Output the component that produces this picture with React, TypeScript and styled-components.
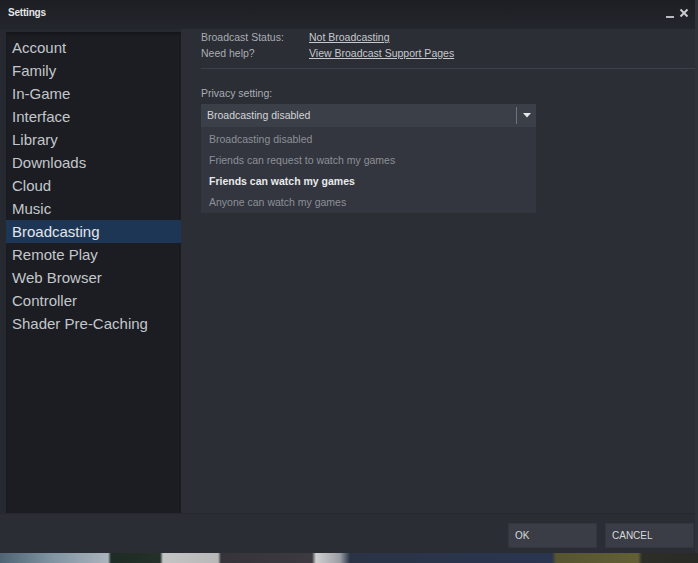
import React from "react";
import styled, { createGlobalStyle } from "styled-components";

const Global = createGlobalStyle`
  html, body { margin: 0; padding: 0; background: #2a2c31; }
  body { font-family: "Liberation Sans", Arial, sans-serif; overflow: hidden; }
  #root { width: 698px; height: 563px; }
`;

const Page = styled.div`
  width: 698px;
  height: 563px;
  display: flex;
  flex-direction: column;
`;

const Window = styled.div`
  height: 553px;
  display: flex;
  flex-direction: column;
  background: #262930;
  border-right: 3px solid #2f3239;
  box-sizing: border-box;
`;

const TitleBar = styled.div`
  height: 29px;
  flex: none;
  display: flex;
  align-items: center;
  justify-content: space-between;
  padding: 0 6px 4px 8px;
  box-sizing: border-box;
  background: linear-gradient(#1c1e23, #23262c);
`;

const Title = styled.span`
  font-size: 10px;
  font-weight: bold;
  color: #e4e6e8;
  letter-spacing: -0.2px;
`;

const WinButtons = styled.div`
  display: flex;
  align-items: center;
  gap: 5px;
`;

const Body = styled.div`
  flex: 1;
  display: flex;
  min-height: 0;
  padding-left: 6px;
`;

const Sidebar = styled.nav`
  width: 175px;
  flex: none;
  margin-top: 3px;
  padding-top: 4px;
  box-sizing: border-box;
  background: #1b1d22;
  box-shadow: inset 0 3px 3px -1px #14161a;
  display: flex;
  flex-direction: column;
`;

const NavItem = styled.div<{ $active?: boolean }>`
  height: 23px;
  line-height: 23px;
  padding-left: 6px;
  font-size: 15px;
  color: ${(p) => (p.$active ? "#e2e6ea" : "#c3c7cc")};
  background: ${(p) => (p.$active ? "#1d3656" : "transparent")};
  white-space: nowrap;
`;

const Content = styled.section`
  flex: 1;
  min-width: 0;
  padding-left: 20px;
  display: flex;
  flex-direction: column;
  background: #2b2e35;
`;

const InfoRow = styled.div`
  display: flex;
  height: 16px;
  line-height: 16px;
  font-size: 10.5px;
`;

const Label = styled.span`
  width: 108px;
  color: #a9adb3;
`;

const Link = styled.span`
  color: #c6cace;
  text-decoration: underline;
  text-underline-offset: 1px;
`;

const Separator = styled.hr`
  margin: 7px 0 0;
  border: none;
  height: 1px;
  background: #3e414a;
`;

const FieldLabel = styled.div`
  margin-top: 16px;
  height: 16px;
  line-height: 16px;
  font-size: 10.5px;
  color: #a9adb3;
`;

const Select = styled.div`
  margin-top: 3px;
  width: 335px;
  display: flex;
  flex-direction: column;
`;

const SelectBox = styled.div`
  height: 23px;
  display: flex;
  align-items: center;
  background: #3b3f47;
  font-size: 10.5px;
  color: #d3d5d9;
  padding: 0 0 1px 6px;
  box-sizing: border-box;
`;

const SelectValue = styled.span`
  flex: 1;
`;

const ArrowBox = styled.div`
  width: 19px;
  height: 17px;
  border-left: 1px solid #6f737b;
  display: flex;
  align-items: center;
  justify-content: center;
`;

const Options = styled.div`
  background: #33363e;
  padding: 2px 0 0;
`;

const Option = styled.div<{ $hot?: boolean }>`
  height: 21px;
  line-height: 21px;
  padding-left: 8px;
  font-size: 10.5px;
  font-weight: ${(p) => (p.$hot ? "bold" : "normal")};
  color: ${(p) => (p.$hot ? "#e8eaec" : "#8c9098")};
`;

const Footer = styled.div`
  height: 40px;
  flex: none;
  display: flex;
  justify-content: flex-end;
  align-items: flex-start;
  padding: 10px 2px 0 0;
  gap: 10px;
  box-sizing: border-box;
  background: #2a2d34;
  border-top: 1px solid #25272d;
`;

const Button = styled.button`
  width: 87px;
  height: 23px;
  border: none;
  background: #3a3d45;
  box-shadow: 0 0 0 1px #33363d;
  color: #d8dadc;
  font-family: "Liberation Sans", Arial, sans-serif;
  font-size: 10px;
  text-align: left;
  padding: 0 0 0 6px;
`;

const Desktop = styled.div`
  height: 10px;
  flex: none;
  background: linear-gradient(
    90deg,
    #4e6474 0,
    #7e92a0 50px,
    #aab4bc 108px,
    #1e2c26 111px,
    #243028 160px,
    #c4c4c4 163px,
    #b8b8b8 218px,
    #36343a 221px,
    #3c3a40 312px,
    #cfcfcf 316px,
    #9a9ea4 340px,
    #2a3346 350px,
    #2a3550 552px,
    #565530 556px,
    #625f34 638px,
    #2e2e28 642px,
    #2a2a26 698px
  );
`;

const navItems = [
  "Account",
  "Family",
  "In-Game",
  "Interface",
  "Library",
  "Downloads",
  "Cloud",
  "Music",
  "Broadcasting",
  "Remote Play",
  "Web Browser",
  "Controller",
  "Shader Pre-Caching",
];

const options = [
  "Broadcasting disabled",
  "Friends can request to watch my games",
  "Friends can watch my games",
  "Anyone can watch my games",
];

export default function App() {
  return (
    <Page>
      <Global />
      <Window>
        <TitleBar>
          <Title>Settings</Title>
          <WinButtons>
            <svg width="8" height="10" viewBox="0 0 8 10">
              <rect x="0" y="8" width="8" height="2" fill="#b8bcc2" />
            </svg>
            <svg width="10" height="10" viewBox="0 0 10 10">
              <path d="M1.5 1.5 L8.5 8.5 M8.5 1.5 L1.5 8.5" stroke="#c8ccd0" strokeWidth="2" />
            </svg>
          </WinButtons>
        </TitleBar>
        <Body>
          <Sidebar>
            {navItems.map((n) => (
              <NavItem key={n} $active={n === "Broadcasting"}>
                {n}
              </NavItem>
            ))}
          </Sidebar>
          <Content>
            <InfoRow>
              <Label>Broadcast Status:</Label>
              <Link>Not Broadcasting</Link>
            </InfoRow>
            <InfoRow>
              <Label>Need help?</Label>
              <Link>View Broadcast Support Pages</Link>
            </InfoRow>
            <Separator />
            <FieldLabel>Privacy setting:</FieldLabel>
            <Select>
              <SelectBox>
                <SelectValue>Broadcasting disabled</SelectValue>
                <ArrowBox>
                  <svg width="8" height="5" viewBox="0 0 8 5">
                    <path d="M0 0 L8 0 L4 4.5 Z" fill="#e6e8ea" />
                  </svg>
                </ArrowBox>
              </SelectBox>
              <Options>
                {options.map((o) => (
                  <Option key={o} $hot={o === "Friends can watch my games"}>
                    {o}
                  </Option>
                ))}
              </Options>
            </Select>
          </Content>
        </Body>
        <Footer>
          <Button>OK</Button>
          <Button>CANCEL</Button>
        </Footer>
      </Window>
      <Desktop />
    </Page>
  );
}
